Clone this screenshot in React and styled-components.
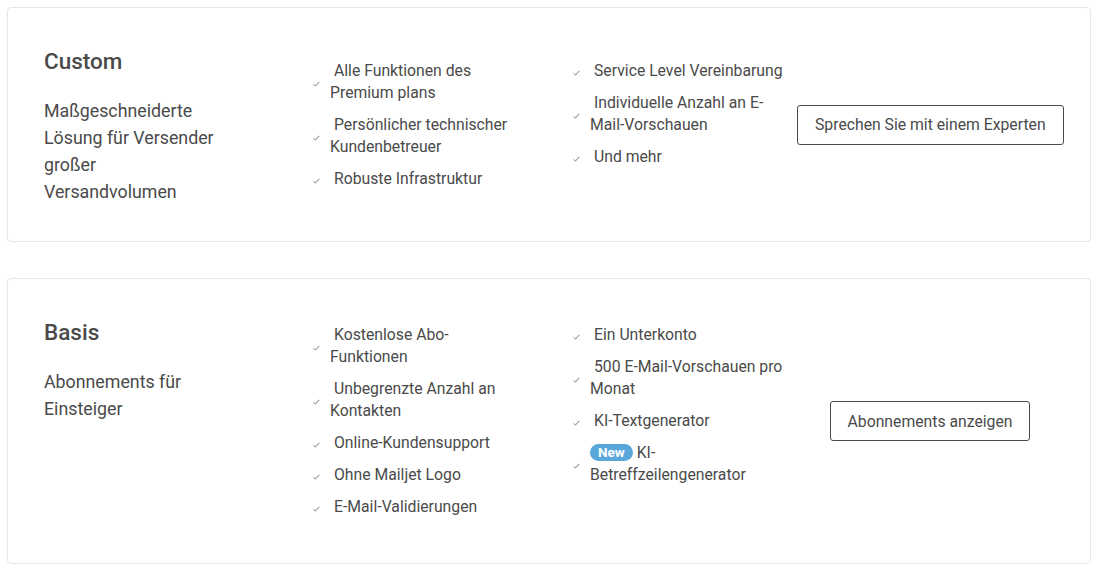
import React from "react";
import styled, { createGlobalStyle } from "styled-components";

const Global = createGlobalStyle`
  html, body { margin: 0; padding: 0; background: #fff; }
  body { font-family: Roboto, "Liberation Sans", sans-serif; color: #4a4a4a; }
  * { box-sizing: border-box; }
`;

const Page = styled.div`
  display: flex;
  flex-direction: column;
  gap: 36px;
  padding: 7px 8px 7px 7px;
`;

const Card = styled.section`
  display: flex;
  align-items: center;
  border: 1px solid #e6e6e6;
  border-radius: 4px;
  padding: 36px 27px 36px 36px;
  background: #fff;
`;

const Intro = styled.div`
  align-self: flex-start;
  flex: 0 0 269px;
`;

const Title = styled.h2`
  margin: 4px 0 0;
  font-size: 22.5px;
  line-height: 26px;
  font-weight: 500;
  color: #4a4a4a;
`;

const Desc = styled.p`
  margin: 23px 0 0;
  width: 182px;
  font-size: 17.8px;
  line-height: 27px;
  color: #4a4a4a;
`;

const Features = styled.div`
  display: flex;
  align-items: flex-start;
  margin: 9px 0;
`;

const List = styled.ul`
  list-style: none;
  margin: 0;
  padding: 0;
  flex: 0 0 ${(p) => p.$width}px;
  display: flex;
  flex-direction: column;
  gap: 10px;
`;

const Item = styled.li`
  display: flex;
  align-items: center;
`;

const CheckBox = styled.span`
  flex: 0 0 17px;
  display: flex;
  align-items: center;
  padding-top: 4px;
`;

const Text = styled.span`
  width: ${(p) => p.$width}px;
  font-size: 15.75px;
  line-height: 22px;
  text-indent: 4px;
  color: #4a4a4a;
`;

const Badge = styled.span`
  display: inline-block;
  text-indent: 0;
  background: #5aa7dc;
  color: #fff;
  font-weight: 700;
  font-size: 13.5px;
  line-height: 17px;
  padding: 0 8px;
  border-radius: 9px;
  margin-right: 4px;
  margin-left: -4px;
  vertical-align: 1px;
`;

const Action = styled.div`
  flex: 1;
  display: flex;
  justify-content: center;
`;

const Button = styled.button`
  font-family: Roboto, "Liberation Sans", sans-serif;
  font-size: 15.75px;
  color: #4a4a4a;
  background: #fff;
  border: 1px solid #4a4a4a;
  border-radius: 3px;
  height: 40px;
  padding: 0 17px;
  white-space: nowrap;
  cursor: pointer;
`;

const Check = () => (
  <svg width="7" height="6" viewBox="0 0 7 6" fill="none">
    <path d="M0.7 3.4 L2.5 5 L6.3 0.8" stroke="#777" strokeWidth="1" />
  </svg>
);

const Feature = ({ children, width }) => (
  <Item>
    <CheckBox>
      <Check />
    </CheckBox>
    <Text $width={width}>{children}</Text>
  </Item>
);

const plans = [
  {
    title: "Custom",
    desc: "Maßgeschneiderte Lösung für Versender großer Versandvolumen",
    col1: [
      "Alle Funktionen des Premium plans",
      "Persönlicher technischer Kundenbetreuer",
      "Robuste Infrastruktur",
    ],
    col2: [
      "Service Level Vereinbarung",
      "Individuelle Anzahl an E-Mail-Vorschauen",
      "Und mehr",
    ],
    cta: "Sprechen Sie mit einem Experten",
  },
  {
    title: "Basis",
    desc: "Abonnements für Einsteiger",
    col1: [
      "Kostenlose Abo-Funktionen",
      "Unbegrenzte Anzahl an Kontakten",
      "Online-Kundensupport",
      "Ohne Mailjet Logo",
      "E-Mail-Validierungen",
    ],
    col2: [
      "Ein Unterkonto",
      "500 E-Mail-Vorschauen pro Monat",
      "KI-Textgenerator",
      { badge: "New", text: "KI-Betreffzeilengenerator" },
    ],
    cta: "Abonnements anzeigen",
  },
];

export default function App() {
  return (
    <>
      <Global />
      <Page>
        {plans.map((p) => (
          <Card key={p.title}>
            <Intro>
              <Title>{p.title}</Title>
              <Desc>{p.desc}</Desc>
            </Intro>
            <Features>
              <List $width={260}>
                {p.col1.map((f) => (
                  <Feature key={f} width={186}>
                    {f}
                  </Feature>
                ))}
              </List>
              <List $width={224}>
                {p.col2.map((f) =>
                  typeof f === "string" ? (
                    <Feature key={f} width={198}>
                      {f}
                    </Feature>
                  ) : (
                    <Feature key={f.text} width={198}>
                      <Badge>{f.badge}</Badge>
                      {f.text}
                    </Feature>
                  )
                )}
              </List>
            </Features>
            <Action>
              <Button>{p.cta}</Button>
            </Action>
          </Card>
        ))}
      </Page>
    </>
  );
}
